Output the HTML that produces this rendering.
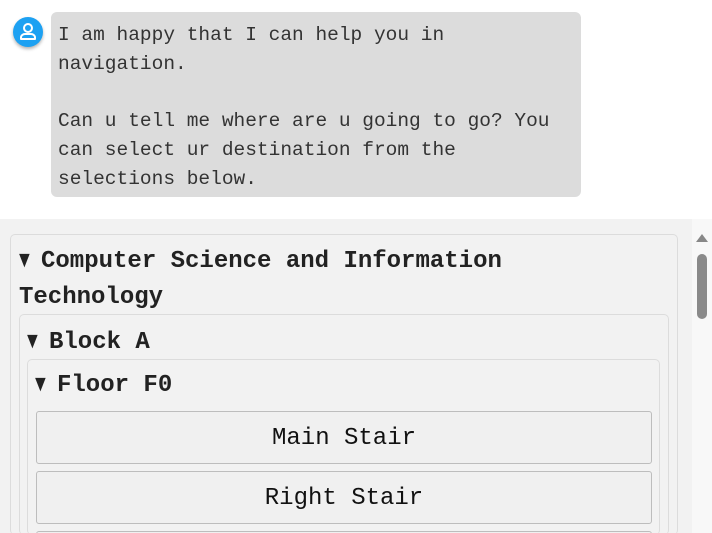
<!DOCTYPE html>
<html style="overflow:hidden;height:533px"><head><style>
body{margin:0;width:712px;height:533px;overflow:hidden;background:#fff;font-family:"Liberation Mono",monospace;position:relative;color:#222}
.av{position:absolute;left:13px;top:17px;width:30px;height:30px;border-radius:50%;background:#1da1f2;box-shadow:0 2px 3px rgba(0,0,0,.3)}
.bub{position:absolute;left:51px;top:12px;width:530px;height:185px;background:#dcdcdc;border-radius:6px}
.bub pre{margin:0;position:absolute;left:7px;top:9px;font:19.5px/28.7px "Liberation Mono",monospace;color:#333}
.panel{position:absolute;left:0;top:219px;width:692px;height:314px;background:#f2f2f2}
.sb{position:absolute;left:692px;top:219px;width:20px;height:314px;background:#f8f8f8}
.box{position:absolute;border:1px solid #dcdcdc;border-radius:5px;border-bottom:none}
.h{position:absolute;font-weight:bold;font-size:24px;line-height:36px;color:#222;white-space:nowrap}
.t{font-size:24px;display:inline-block;width:22px;transform:scaleX(.75);transform-origin:left}
.btn{position:absolute;left:36px;width:614px;height:51px;border:1px solid #bdbdbd;border-radius:3px;background:#f0f0f0;text-align:center;font-size:24px;line-height:54px;color:#111}
</style></head><body>
<div class="av"><svg width="30" height="30" viewBox="0 0 30 30"><circle cx="15" cy="11" r="4" fill="none" stroke="#fff" stroke-width="2"/><path d="M8 22v-1.5c0-2 2-3.5 4-3.5h6c2 0 4 1.5 4 3.5V22z" fill="none" stroke="#fff" stroke-width="2" stroke-linejoin="round"/></svg></div>
<div class="bub"><pre>I am happy that I can help you in
navigation.

Can u tell me where are u going to go? You
can select ur destination from the
selections below.</pre></div>
<div class="panel"></div>
<div class="sb"><svg width="20" height="110"><path d="M4 23L10 15L16 23z" fill="#888"/><rect x="5" y="35" width="10" height="65" rx="5" fill="#8a8a8a"/></svg></div>
<div class="box" style="left:10px;top:234px;width:666px;height:300px"></div>
<div class="h" style="left:19px;top:244px"><span class="t">▼</span>Computer Science and Information</div>
<div class="h" style="left:19px;top:280px">Technology</div>
<div class="box" style="left:19px;top:314px;width:648px;height:220px"></div>
<div class="h" style="left:27px;top:325px"><span class="t">▼</span>Block A</div>
<div class="box" style="left:27px;top:359px;width:631px;height:175px"></div>
<div class="h" style="left:35px;top:368px"><span class="t">▼</span>Floor F0</div>
<div class="btn" style="top:411px">Main Stair</div>
<div class="btn" style="top:471px">Right Stair</div>
<div class="btn" style="top:531px;height:10px"></div>
</body></html>
